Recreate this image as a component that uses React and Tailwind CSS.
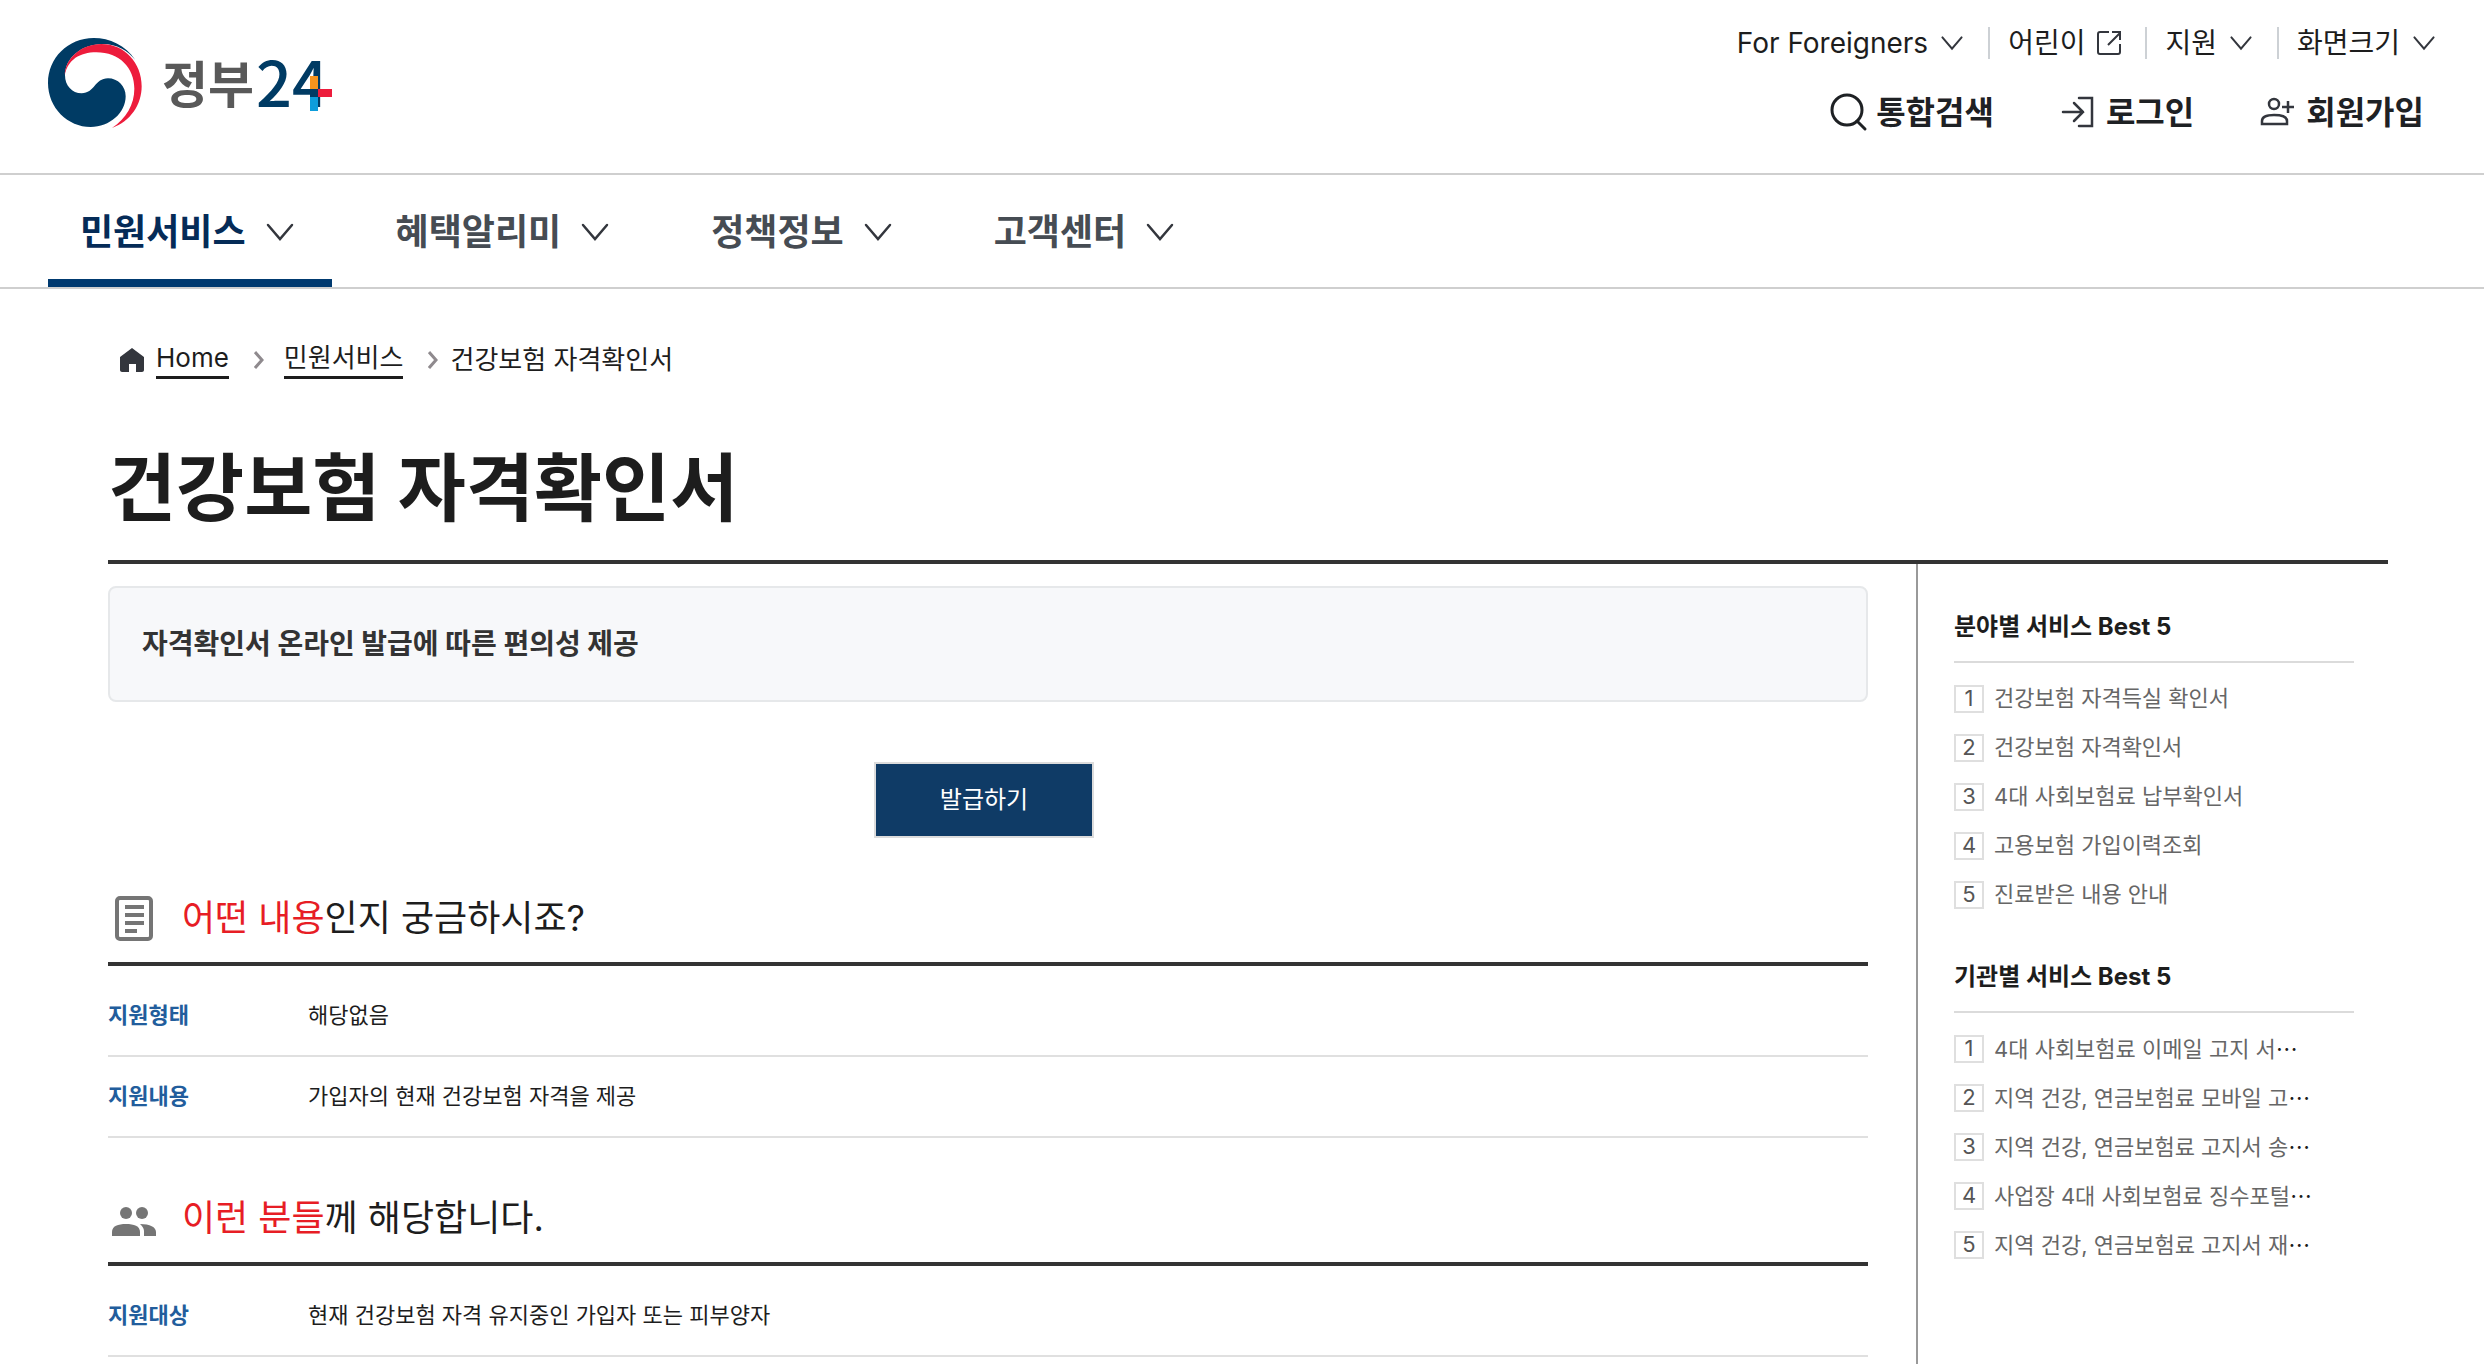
const topLinks = [
  { label: 'For Foreigners', icon: 'chevron' },
  { label: '어린이', icon: 'external' },
  { label: '지원', icon: 'chevron' },
  { label: '화면크기', icon: 'chevron' },
];

const navItems = ['민원서비스', '혜택알리미', '정책정보', '고객센터'];

const bestByField = [
  { text: '건강보험 자격득실 확인서' },
  { text: '건강보험 자격확인서' },
  { text: '4대 사회보험료 납부확인서' },
  { text: '고용보험 가입이력조회' },
  { text: '진료받은 내용 안내' },
];

const bestByAgency = [
  { text: '4대 사회보험료 이메일 고지 서', cut: true },
  { text: '지역 건강, 연금보험료 모바일 고', cut: true },
  { text: '지역 건강, 연금보험료 고지서 송', cut: true },
  { text: '사업장 4대 사회보험료 징수포털', cut: true },
  { text: '지역 건강, 연금보험료 고지서 재', cut: true },
];

function Logo() {
  return (
    <a href="#" aria-label="정부24" className="flex items-center gap-5">
      <svg viewBox="0 0 282 270" className="w-[94px] h-[90px]">
        <path
          fill="#003b64"
          d="M262 66C232 22 185 0 137 0C60 0 0 60 0 135C0 210 60 267 128 267C185 267 233 225 233 175C233 145 210 121 180 121C140 121 140 166 101 166C72 166 51 143 51 112C51 60 100 18 165 18C205 18 240 38 262 66Z"
        />
        <path
          fill="#ed1c3c"
          d="M50 112C52 60 100 18 160 18C230 18 281 75 281 145C281 200 248 250 192 270C235 240 259 200 259 152C259 90 215 43 145 43C95 43 60 65 50 112Z"
        />
      </svg>
      <svg viewBox="0 0 180 110" className="w-[180px] h-[110px]">
        <text x="0" y="75" fontSize="50" fontWeight="600" fill="#595959" className="font-['Noto_Sans_CJK_KR',sans-serif]">
          정부
        </text>
        <text x="94" y="79" fontSize="63" fontWeight="500" fill="#003b64" className="font-['Noto_Sans_CJK_KR',sans-serif]">
          24
        </text>
        <rect x="148" y="48" width="8" height="13" fill="#f7941d" />
        <rect x="148" y="61" width="8" height="8" fill="#003b64" />
        <rect x="148" y="69" width="8" height="14" fill="#0d9ddb" />
        <rect x="156" y="61" width="14" height="8" fill="#ed1c3c" />
      </svg>
    </a>
  );
}

function ChevronDown({ className }) {
  return (
    <svg viewBox="0 0 40 40" fill="none" stroke="#33363d" strokeWidth="2.5" strokeLinecap="round" className={className}>
      <path d="M8 13L20 27L32 13" />
    </svg>
  );
}

function ExternalIcon() {
  return (
    <svg viewBox="0 0 32 32" fill="none" stroke="#33363d" strokeWidth="2" className="size-8">
      <path d="M16 5H7Q5 5 5 7V25Q5 27 7 27H25Q27 27 27 25V17" />
      <path d="M15 18L27 6M19 5H27V13" />
    </svg>
  );
}

function SearchIcon() {
  return (
    <svg viewBox="0 0 40 40" fill="none" stroke="#1e2124" strokeWidth="3" className="size-10">
      <circle cx="19" cy="17" r="15" />
      <path d="M29 28L37 36" strokeLinecap="round" />
    </svg>
  );
}

function LoginIcon() {
  return (
    <svg viewBox="0 0 40 40" fill="none" stroke="#33363d" strokeWidth="2.5" strokeLinecap="round" className="size-10">
      <path d="M21 5H34V33H21" />
      <path d="M5 19H25M16 10L25 19L16 28" />
    </svg>
  );
}

function JoinIcon() {
  return (
    <svg viewBox="0 0 40 40" fill="none" stroke="#33363d" strokeWidth="2.5" className="size-10">
      <circle cx="16" cy="11" r="5" />
      <path d="M4 31V28C4 24 8 22 16 22C25 22 29 24 29 28V31Z" />
      <path d="M30 8V20M24 14H36" />
    </svg>
  );
}

function HomeIcon() {
  return (
    <svg viewBox="0 0 24 24" fill="#33363d" className="size-6">
      <path d="M12 0L24 9V22C24 23 23 24 22 24H16V16H9V24H2C1 24 0 23 0 22V9Z" />
    </svg>
  );
}

function ChevronRight() {
  return (
    <svg viewBox="0 0 10 18" fill="none" stroke="#8f8a8e" strokeWidth="3" className="w-[10px] h-[18px]">
      <path d="M1 1L8 9L1 17" />
    </svg>
  );
}

function DocumentIcon() {
  return (
    <svg viewBox="0 0 48 48" fill="none" stroke="#757575" className="size-12">
      <rect x="7" y="4" width="34" height="41" rx="3" strokeWidth="4" />
      <path d="M15 13H34M15 21H34M15 29H34M15 37H27" strokeWidth="4" />
    </svg>
  );
}

function PeopleIcon() {
  return (
    <svg viewBox="0 0 48 48" fill="#757575" className="size-12">
      <circle cx="16" cy="19" r="6" />
      <circle cx="32" cy="19" r="6" />
      <path d="M2 42V38C2 32 8 30 16 30C24 30 30 32 30 38V42Z" />
      <path d="M34 42V37C34 34 32 32 30 30C40 30 46 33 46 38V42Z" />
    </svg>
  );
}

function Section({ icon, accent, rest, rows }) {
  return (
    <section>
      <h2 className="flex items-center gap-6 pl-[2px] pb-5 border-b-4 border-[#333] text-4xl leading-[48px]">
        {icon}
        <span>
          <span className="text-[#e71d25]">{accent}</span>
          {rest}
        </span>
      </h2>
      <dl className="pt-[10px]">
        {rows.map((row) => (
          <div key={row.label} className="flex items-center h-[81px] border-b-2 border-[#e0e0e0] text-[22px]">
            <dt className="w-[200px] font-bold text-[#225d9c]">{row.label}</dt>
            <dd className="flex-1">{row.value}</dd>
          </div>
        ))}
      </dl>
    </section>
  );
}

function BestList({ title, items }) {
  return (
    <section>
      <h3 className="pb-4 border-b-2 border-[#dbdbdb] text-2xl leading-9 font-bold">{title}</h3>
      <ol className="pt-[11px]">
        {items.map((item, i) => (
          <li key={item.text} className="flex items-center h-[49px] gap-[10px] text-[22px] text-[#666]">
            <span className="flex items-center justify-center w-[30px] h-7 border-2 border-[#dfdfdf] text-[#555]">
              {i + 1}
            </span>
            <a href="#" className="whitespace-nowrap">
              {item.text}
              {item.cut && <span className="text-[#1d1d1d] font-['Noto_Sans_CJK_KR',sans-serif]">…</span>}
            </a>
          </li>
        ))}
      </ol>
    </section>
  );
}

export default function App() {
  return (
    <div lang="ko" className="h-screen overflow-hidden flex flex-col bg-white text-[#1d1d1d] font-[Inter,'Noto_Sans_CJK_KR',sans-serif]">
      <header>
        <div className="flex justify-between items-start h-[173px] pl-12 pr-11">
          <div className="pt-7">
            <Logo />
          </div>
          <div className="flex flex-col items-end pt-[27px]">
            <ul className="flex items-center h-8 divide-x-2 divide-[#cdd1d5] text-[28px] leading-8">
              {topLinks.map((link) => (
                <li key={link.label} className="pl-[18px] pr-5 last:pr-0">
                  <a href="#" className="flex items-center gap-2">
                    {link.label}
                    {link.icon === 'chevron' ? <ChevronDown className="size-8" /> : <ExternalIcon />}
                  </a>
                </li>
              ))}
            </ul>
            <div className="flex gap-16 pt-[34px] pr-4 text-[32px] leading-10 font-bold text-[#1e2124]">
              <button type="button" className="flex items-center gap-2">
                <SearchIcon />
                통합검색
              </button>
              <a href="#" className="flex items-center gap-2">
                <LoginIcon />
                로그인
              </a>
              <a href="#" className="flex items-center gap-2">
                <JoinIcon />
                회원가입
              </a>
            </div>
          </div>
        </div>
        <nav className="flex gap-8 h-[116px] px-12 border-y-2 border-[#cfcfcf]">
          {navItems.map((item, i) => (
            <button
              key={item}
              type="button"
              className={
                i === 0
                  ? 'flex items-center gap-[14px] px-8 pt-[10px] border-b-8 border-[#003a70] text-4xl font-bold text-[#052b57]'
                  : 'flex items-center gap-[14px] px-8 pt-[2px] text-4xl font-bold text-[#464c53]'
              }
            >
              {item}
              <ChevronDown className="size-10" />
            </button>
          ))}
        </nav>
      </header>

      <main className="flex-1 min-h-0 flex flex-col pl-[108px] pr-24">
        <ol className="flex items-center pt-[51px] pl-3 text-[26px] leading-9">
          <li className="flex items-center gap-3">
            <HomeIcon />
            <a href="#" className="border-b-3 border-[#1d1d1d]">Home</a>
          </li>
          <li className="flex items-center gap-5 pl-[25px]">
            <ChevronRight />
            <a href="#" className="border-b-3 border-[#1d1d1d]">민원서비스</a>
          </li>
          <li className="flex items-center gap-3 pl-[25px]">
            <ChevronRight />
            건강보험 자격확인서
          </li>
        </ol>

        <h1 className="pt-[63px] pb-[26px] border-b-4 border-[#333] text-[74px] leading-[92px] font-bold">
          건강보험 자격확인서
        </h1>

        <div className="flex flex-1 min-h-0">
          <div className="flex-1 pt-[22px] pr-12">
            <p className="px-8 py-9 border-2 border-[#e6e8ea] rounded-lg bg-[#f7f8fa] text-[28px] leading-10 font-bold text-[#333]">
              자격확인서 온라인 발급에 따른 편의성 제공
            </p>
            <div className="flex justify-center pt-[60px] pb-14 pr-2">
              <button type="button" className="px-16 h-[76px] border-2 border-[#dcdcdc] bg-[#0f3b66] text-2xl text-white">
                발급하기
              </button>
            </div>
            <Section
              icon={<DocumentIcon />}
              accent="어떤 내용"
              rest="인지 궁금하시죠?"
              rows={[
                { label: '지원형태', value: '해당없음' },
                { label: '지원내용', value: '가입자의 현재 건강보험 자격을 제공' },
              ]}
            />
            <div className="pt-14">
              <Section
                icon={<PeopleIcon />}
                accent="이런 분들"
                rest="께 해당합니다."
                rows={[{ label: '지원대상', value: '현재 건강보험 자격 유지중인 가입자 또는 피부양자' }]}
              />
            </div>
          </div>
          <aside className="flex flex-col gap-10 w-[472px] pt-[45px] pl-9 pr-[34px] border-l-2 border-[#999]">
            <BestList title="분야별 서비스 Best 5" items={bestByField} />
            <BestList title="기관별 서비스 Best 5" items={bestByAgency} />
          </aside>
        </div>
      </main>
    </div>
  );
}
